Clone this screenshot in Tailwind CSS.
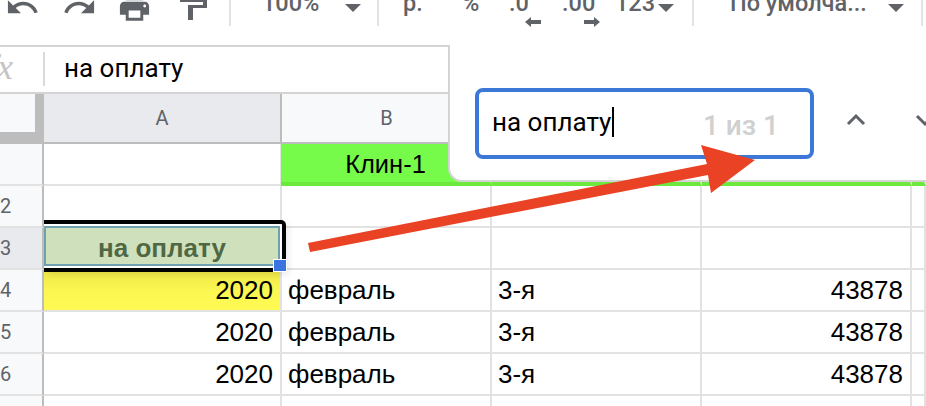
<!DOCTYPE html>
<html lang="ru">
<head>
    <meta charset="UTF-8">
    <script src="https://cdn.jsdelivr.net/npm/@tailwindcss/browser@4"></script>
</head>
<body class="bg-white overflow-hidden">
<div class="relative w-[926px] h-[406px] overflow-hidden font-['Liberation_Sans',sans-serif] text-[26px] text-black">

    <!-- Toolbar -->
    <div class="relative h-[45px] overflow-hidden text-[#5f6368] font-['Roboto',sans-serif] font-medium text-[23.5px] leading-[28px]">
        <div class="flex items-start h-full">
            <svg class="w-[35px] h-[35px] ml-[5px] mt-[-10px] shrink-0" viewBox="0 0 24 24" fill="#5f6368"><path d="M12.5 8c-2.65 0-5.05.99-6.9 2.6L2 7v9h9l-3.62-3.62c1.39-1.16 3.16-1.88 5.12-1.88 3.54 0 6.55 2.31 7.6 5.5l2.37-.78C21.08 11.03 17.15 8 12.5 8z"/></svg>
            <svg class="w-[35px] h-[35px] ml-[22px] mt-[-10px] shrink-0" viewBox="0 0 24 24" fill="#5f6368"><path d="M18.4 10.6C16.55 8.99 14.15 8 11.5 8c-4.65 0-8.58 3.03-9.96 7.22L3.9 16c1.05-3.19 4.05-5.5 7.6-5.5 1.95 0 3.73.72 5.12 1.88L13 16h9V7l-3.6 3.6z"/></svg>
            <svg class="w-[35px] h-[35px] ml-[20px] mt-[-10px] shrink-0" viewBox="0 0 24 24" fill="#5f6368"><path d="M19 8H5c-1.66 0-3 1.34-3 3v6h4v4h12v-4h4v-6c0-1.66-1.34-3-3-3zm-3 11H8v-5h8v5zm3-7c-.55 0-1-.45-1-1s.45-1 1-1 1 .45 1 1-.45 1-1 1zm-1-9H6v4h12V3z"/></svg>
            <svg class="w-[30px] h-[22px] ml-[28px] shrink-0" viewBox="0 0 30 22" fill="#5f6368"><path d="M0 0h24v2H0zM23 0h4v8H13v12H8V5h15z"/></svg>
            <div class="w-[2px] h-[26px] bg-[#e3e3e3] ml-[19px] shrink-0"></div>
            <span class="ml-[31px] mt-[-11px] w-[58px] shrink-0">100%</span>
            <div class="ml-[25px] mt-[4px] w-0 h-0 border-x-[8px] border-x-transparent border-t-[8px] border-t-[#5f6368] shrink-0"></div>
            <div class="w-[2px] h-[26px] bg-[#e3e3e3] ml-[16px] shrink-0"></div>
            <span class="ml-[24px] mt-[-11px] w-[24px] shrink-0">р.</span>
            <span class="ml-[35px] mt-[-11px] w-[24px] shrink-0">%</span>
            <span class="ml-[23px] mt-[-11px] w-[30px] shrink-0">.0</span>
            <span class="ml-[23px] mt-[-11px] w-[40px] shrink-0">.00</span>
            <span class="ml-[13px] mt-[-11px] w-[40px] shrink-0">123</span>
            <div class="ml-[3px] mt-[4px] w-0 h-0 border-x-[8px] border-x-transparent border-t-[8px] border-t-[#5f6368] shrink-0"></div>
            <div class="w-[2px] h-[26px] bg-[#e3e3e3] ml-[18px] shrink-0"></div>
            <span class="ml-[36px] mt-[-11px] w-[142px] shrink-0 whitespace-nowrap">По умолча...</span>
            <div class="ml-[16px] mt-[4px] w-0 h-0 border-x-[8px] border-x-transparent border-t-[8px] border-t-[#5f6368] shrink-0"></div>
            <div class="w-[2px] h-[26px] bg-[#e3e3e3] ml-[17px] shrink-0"></div>
        </div>
        <!-- little arrows under .0 / .00 -->
        <svg class="absolute left-[525px] top-[17px] w-[16px] h-[10px]" viewBox="0 0 16 10" fill="#5f6368"><path d="M0 5l6-5v3h10v4H6v3z"/></svg>
        <svg class="absolute left-[584px] top-[17px] w-[16px] h-[10px]" viewBox="0 0 16 10" fill="#5f6368"><path d="M16 5l-6-5v3H0v4h10v3z"/></svg>
    </div>

    <!-- Formula bar -->
    <div class="flex h-[49px] border-y-2 border-[#d4d4d4] font-['Roboto',sans-serif] text-[26px]">
        <div class="w-[43px] shrink-0 overflow-hidden flex justify-end pr-[30px] font-['Liberation_Serif',serif] italic text-[#c4c4c4] text-[36px] leading-[40px] whitespace-nowrap">fx</div>
        <div class="w-[2px] h-[34px] mt-[5px] bg-[#dadada] shrink-0"></div>
        <div class="pl-[19px] leading-[43px]">на оплату</div>
    </div>

    <!-- Column headers -->
    <div class="grid grid-cols-[44px_238px_210px_210px_210px_1fr] h-[50px] font-['Roboto',sans-serif] text-[#5f6368] text-[20px] border-b-2 border-[#bdbdbd]">
        <div class="bg-[#f8f9fa] border-r-[9px] border-b-[10px] border-[#bdbdbd]"></div>
        <div class="bg-[#e8eaed] border-r-2 border-[#bdbdbd] flex items-center justify-center">A</div>
        <div class="bg-[#f8f9fa] border-r border-[#d4d4d4] flex items-center justify-center">B</div>
        <div class="bg-[#f8f9fa]"></div>
        <div class="bg-[#f8f9fa]"></div>
        <div class="bg-[#f8f9fa]"></div>
    </div>

    <!-- Rows -->
    <div class="grid grid-cols-[44px_238px_210px_210px_210px_1fr] auto-rows-[42px] [&>div]:border-r-2 [&>div]:border-b-2 [&>div]:border-[#e2e2e2] leading-[40px]">
        <div class="bg-[#f8f9fa] !border-r-[#bdbdbd]"></div>
        <div></div>
        <div class="bg-[#77fb4a] -ml-[1px] !border-b-[4px] !border-b-[#6ce83f] !border-r-[#77fb4a] text-center text-[25.5px]">Клин-1</div>
        <div class="!border-b-[4px] !border-b-[#6ce83f]"></div>
        <div class="!border-b-[4px] !border-b-[#6ce83f]"></div>
        <div class="!border-b-[4px] !border-b-[#6ce83f]"></div>

        <div class="bg-[#f8f9fa] !border-r-[#bdbdbd] font-['Roboto',sans-serif] text-[20px] text-[#5f6368] text-right pr-[34px] overflow-hidden">2</div>
        <div></div><div></div><div></div><div></div><div></div>

        <div class="bg-[#e8eaed] !border-r-[#bdbdbd] font-['Roboto',sans-serif] text-[20px] text-[#5f6368] text-right pr-[34px] overflow-hidden">3</div>
        <div class="bg-[#cfe0bd] text-center font-bold text-[#4f6843]">на оплату</div>
        <div></div><div></div><div></div><div></div>

        <div class="bg-[#f8f9fa] !border-r-[#bdbdbd] font-['Roboto',sans-serif] text-[20px] text-[#5f6368] text-right pr-[34px] overflow-hidden">4</div>
        <div class="bg-gradient-to-b from-[#eee64a] via-[#fbf650] to-[#fffb54] text-right pr-[7px]">2020</div>
        <div class="pl-[6px]">февраль</div><div class="pl-[6px]">3-я</div><div class="text-right pr-[7px]">43878</div><div></div>

        <div class="bg-[#f8f9fa] !border-r-[#bdbdbd] font-['Roboto',sans-serif] text-[20px] text-[#5f6368] text-right pr-[34px] overflow-hidden">5</div>
        <div class="text-right pr-[7px]">2020</div>
        <div class="pl-[6px]">февраль</div><div class="pl-[6px]">3-я</div><div class="text-right pr-[7px]">43878</div><div></div>

        <div class="bg-[#f8f9fa] !border-r-[#bdbdbd] font-['Roboto',sans-serif] text-[20px] text-[#5f6368] text-right pr-[34px] overflow-hidden">6</div>
        <div class="text-right pr-[7px]">2020</div>
        <div class="pl-[6px]">февраль</div><div class="pl-[6px]">3-я</div><div class="text-right pr-[7px]">43878</div><div></div>

        <div class="bg-[#f8f9fa] !border-r-[#bdbdbd]"></div>
        <div></div><div></div><div></div><div></div><div></div>
    </div>

    <!-- Selection on A3 -->
    <div class="absolute left-[44px] top-[220px] w-[242px] h-[52px] border-t-[4px] border-r-[4px] border-b-[4px] border-black rounded-tr-[5px] pointer-events-none shadow-[inset_0_-2px_0_white,inset_-2px_0_0_white,3px_3px_6px_rgba(0,0,0,0.08)]">
        <div class="absolute left-0 top-[2px] w-[236px] h-[40px] border-2 border-[#6ea0ad]"></div>
    </div>
    <div class="absolute left-[273px] top-[259px] w-[14px] h-[13px] bg-[#3b74e0] border border-white"></div>

    <!-- Find popup -->
    <div class="absolute left-[448px] top-[45px] w-[490px] h-[137px] bg-white rounded-bl-[14px] border-l-2 border-b-2 border-[#d4d4d4] flex items-start pl-[25px] pt-[43px]">
        <div class="w-[339px] h-[71px] border-[4px] border-[#3c78d8] rounded-[8px] flex items-center pl-[13px] pr-[31px] font-['Roboto',sans-serif] text-[26px] shrink-0">
            <span class="border-r-2 border-black leading-[30px] pr-[1px] mb-[3px]">на оплату</span>
            <span class="ml-auto mt-[4px] text-[28px] font-medium text-[#d0d0d0]">1 из 1</span>
        </div>
        <svg class="w-[20px] h-[14px] ml-[32px] mt-[24px] shrink-0" viewBox="0 0 20 14" fill="none" stroke="#5f6368" stroke-width="3"><path d="M2 12l8-8 8 8"/></svg>
        <svg class="w-[20px] h-[14px] ml-[49px] mt-[26px] shrink-0" viewBox="0 0 20 14" fill="none" stroke="#5f6368" stroke-width="3"><path d="M2 2l8 8 8-8"/></svg>
    </div>

    <!-- Red arrow -->
    <svg class="absolute left-0 top-0 w-[926px] h-[406px] pointer-events-none" viewBox="0 0 926 406">
        <polygon fill="#e94225" points="308,243 707,164 701,145 755,160 711,193 708,175 310,252"/>
    </svg>
</div>
</body>
</html>
